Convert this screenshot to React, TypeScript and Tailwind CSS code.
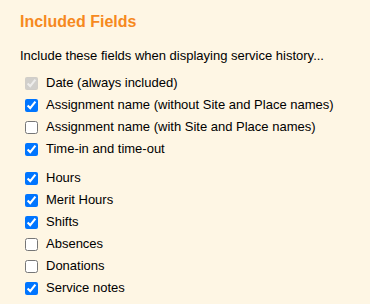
const GROUP_A = [
  { label: 'Date (always included)', checked: true, disabled: true },
  { label: 'Assignment name (without Site and Place names)', checked: true },
  { label: 'Assignment name (with Site and Place names)', checked: false },
  { label: 'Time-in and time-out', checked: true },
]

const GROUP_B = [
  { label: 'Hours', checked: true },
  { label: 'Merit Hours', checked: true },
  { label: 'Shifts', checked: true },
  { label: 'Absences', checked: false },
  { label: 'Donations', checked: false },
  { label: 'Service notes', checked: true },
]

type Field = { label: string; checked: boolean; disabled?: boolean }

function FieldRow({ f }: { f: Field }) {
  return (
    <label className="flex items-center h-[22px] text-[13px] text-black">
      <input
        type="checkbox"
        defaultChecked={f.checked}
        disabled={f.disabled}
        className="w-[13px] h-[13px] ml-[5px] mr-[8px]"
      />
      <span>{f.label}</span>
    </label>
  )
}

export default function App() {
  return (
    <div
      className="w-[370px] h-[304px] bg-[#fef6e4] px-5 pt-[12px]"
      style={{ fontFamily: '"Liberation Sans", Arial, sans-serif' }}
    >
      <h2 className="text-[16px] leading-[20px] font-bold text-[#f6891e]">Included Fields</h2>
      <p className="mt-4 text-[13px] leading-[15px] text-black">
        Include these fields when displaying service history...
      </p>

      {/* first group */}
      <div className="mt-[9px]">
        {GROUP_A.map((f) => <FieldRow key={f.label} f={f} />)}
      </div>

      {/* second group */}
      <div className="mt-[7px]">
        {GROUP_B.map((f) => <FieldRow key={f.label} f={f} />)}
      </div>
    </div>
  )
}
